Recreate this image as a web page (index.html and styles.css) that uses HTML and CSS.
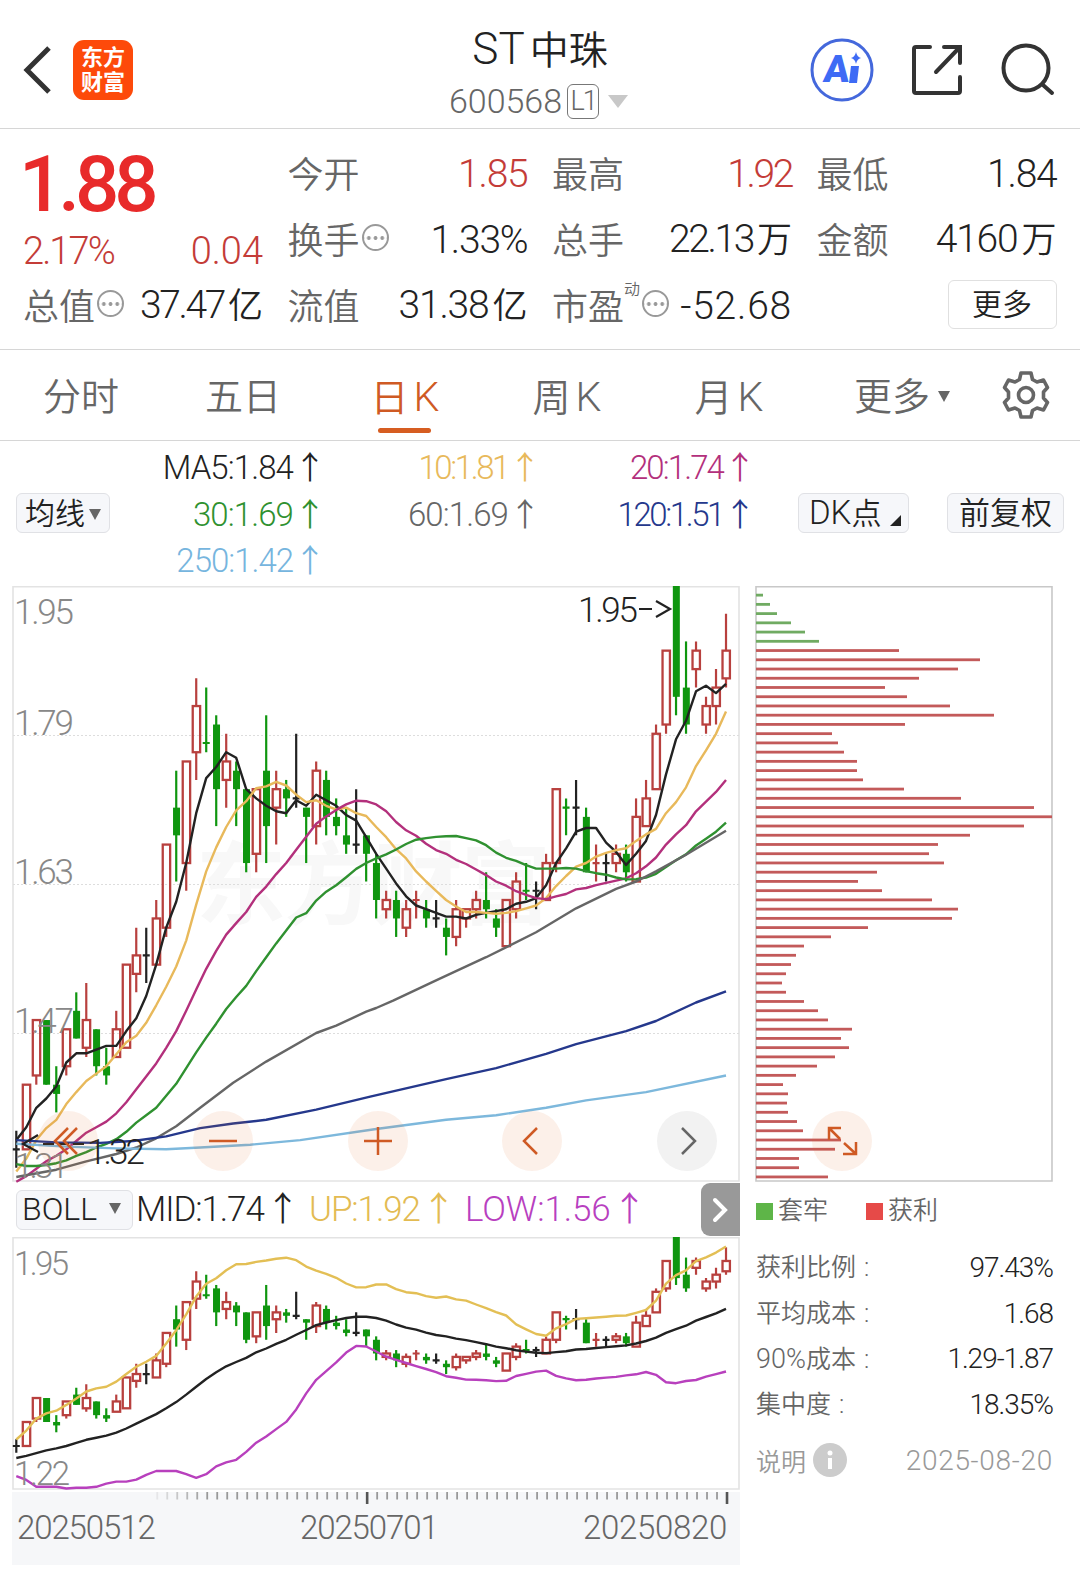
FILE: index.html
```
<!DOCTYPE html>
<html lang="zh-CN">
<head>
    <meta charset="UTF-8">
    <meta name="viewport" content="width=device-width, initial-scale=1.0">
    <title>ST中珠 600568</title>
    <link rel="stylesheet" href="styles.css">
</head>
<body>
    <header class="header">
        <div class="header-left">
            <svg class="back-icon" width="30" height="50" viewBox="0 0 30 50"><path d="M26 3 L4 25 L26 47" fill="none" stroke="#333" stroke-width="5"/></svg>
            <div class="logo"><span>东方</span><span>财富</span></div>
        </div>
        <div class="header-title">
            <h1><span class="latin">ST</span>中珠</h1>
            <div class="code">
                <span class="code-num">600568</span>
                <span class="level">L1</span>
                <span class="code-arrow"></span>
            </div>
        </div>
        <div class="header-right">
            <svg width="64" height="64" viewBox="0 0 64 64">
                <circle cx="32" cy="32" r="30" fill="none" stroke="#4468dc" stroke-width="3"/>
                <text x="17" y="44" class="ai-text" transform="skewX(-6)">A</text>
                <path d="M41 28 h8 l-2 17 h-8 z" fill="#3e6bf5"/>
                <path d="M46 14 q1 5 5 6 q-4 1 -5 6 q-1 -5 -5 -6 q4 -1 5 -6z" fill="#3e6bf5"/>
            </svg>
            <svg width="54" height="54" viewBox="0 0 54 54" fill="none" stroke="#333" stroke-width="4" stroke-linecap="round">
                <path d="M20 4 H6 Q4 4 4 6 V48 Q4 50 6 50 H48 Q50 50 50 48 V34"/>
                <path d="M34 4 H50 V20 M49 5 L26 29"/>
            </svg>
            <svg width="54" height="54" viewBox="0 0 54 54" fill="none" stroke="#333" stroke-width="4" stroke-linecap="round">
                <circle cx="26" cy="25" r="22.5"/>
                <path d="M43 42 L52 50"/>
            </svg>
        </div>
    </header>

    <section class="quote">
        <div class="price-cell">
            <div class="price">1.88</div>
            <div class="change"><span class="pct">2.17%</span><span>0.04</span></div>
        </div>
        <div class="cell"><label>今开</label><span class="val red">1.85</span></div>
        <div class="cell"><label>最高</label><span class="val red tight">1.92</span></div>
        <div class="cell"><label>最低</label><span class="val">1.84</span></div>
        <div class="cell"><label>换手<i class="dots"></i></label><span class="val">1.33%</span></div>
        <div class="cell"><label>总手</label><span class="val tight">22.13<b>万</b></span></div>
        <div class="cell"><label>金额</label><span class="val">4160<b>万</b></span></div>
        <div class="cell"><label>总值<i class="dots"></i></label><span class="val tight">37.47<b>亿</b></span></div>
        <div class="cell"><label>流值</label><span class="val">31.38<b>亿</b></span></div>
        <div class="cell"><label>市盈<sup>动</sup><i class="dots"></i></label><span class="val loose">-52.68</span></div>
        <div class="cell cell-more"><button class="more-btn">更多</button></div>
    </section>

    <nav class="tabs">
        <a class="tab">分时</a>
        <a class="tab">五日</a>
        <a class="tab active">日<span class="k">K</span></a>
        <a class="tab">周<span class="k">K</span></a>
        <a class="tab">月<span class="k">K</span></a>
        <a class="tab tab-more">更多<i class="down"></i></a>
        <svg class="gear" width="48" height="50" viewBox="-24 -25 48 50" fill="none" stroke="#666" stroke-width="3.6" stroke-linejoin="round">
            <path d="M-5 -22 H5 L6.5 -15.5 L11 -13 L17.5 -15 L21.5 -7.5 L17.5 -3 V3 L21.5 7.5 L17.5 15 L11 13 L6.5 15.5 L5 22 H-5 L-6.5 15.5 L-11 13 L-17.5 15 L-21.5 7.5 L-17.5 3 V-3 L-21.5 -7.5 L-17.5 -15 L-11 -13 L-6.5 -15.5 Z"/>
            <circle r="7.5"/>
        </svg>
    </nav>

    <section class="ma-bar">
        <button class="tool-btn ma-btn">均线<i class="down"></i></button>
        <div class="ma-list">
            <span class="c-ma5">MA5:1.84<em>↑</em></span>
            <span class="c-ma10">10:1.81<em>↑</em></span>
            <span class="c-ma20">20:1.74<em>↑</em></span>
            <span class="c-ma30">30:1.69<em>↑</em></span>
            <span class="c-ma60">60:1.69<em>↑</em></span>
            <span class="c-ma120">120:1.51<em>↑</em></span>
            <span class="c-ma250">250:1.42<em>↑</em></span>
        </div>
        <button class="tool-btn dk-btn"><span class="latin">DK</span>点<i class="corner"></i></button>
        <button class="tool-btn fq-btn">前复权</button>
    </section>

    <main class="charts">
        <div class="left">
            <div class="kline">
                <svg id="kline" width="728" height="596"></svg>
                <button class="round" style="left:26px"><svg width="60" height="60"><path d="M30 17 L17 30 L30 43 M39 17 L26 30 L39 43"/></svg></button>
                <button class="round" style="left:181px"><svg width="60" height="60"><path d="M16 30 H44"/></svg></button>
                <button class="round" style="left:336px"><svg width="60" height="60"><path d="M16 30 H44 M30 16 V44"/></svg></button>
                <button class="round" style="left:490px"><svg width="60" height="60"><path d="M35 17 L22 30 L35 43"/></svg></button>
                <button class="round gray" style="left:645px"><svg width="60" height="60"><path d="M25 17 L38 30 L25 43"/></svg></button>
            </div>
            <div class="boll-bar">
                <button class="tool-btn boll-btn">BOLL<i class="down"></i></button>
                <span class="boll-mid">MID:1.74<em>↑</em></span>
                <span class="boll-up">UP:1.92<em>↑</em></span>
                <span class="boll-low">LOW:1.56<em>↑</em></span>
                <button class="next-btn"><svg width="20" height="28" viewBox="0 0 20 28"><path d="M4 4 L14 14 L4 24" fill="none" stroke="#fff" stroke-width="4" stroke-linecap="round"/></svg></button>
            </div>
            <svg id="boll" width="728" height="253"></svg>
            <div class="axis">
                <svg id="ticks" width="728" height="14"></svg>
                <div class="dates"><span>20250512</span><span>20250701</span><span class="last">20250820</span></div>
            </div>
        </div>

        <aside class="chips">
            <div class="chip-chart">
                <svg id="chips" width="298" height="596"></svg>
                <button class="round" style="left:57px"><svg width="60" height="60"><path d="M17 29 V17 H29 M17 17 L28 28 M31 43 H44 V31 M44 43 L32 32"/></svg></button>
            </div>
            <div class="legend">
                <span><i class="sq sq-green"></i>套牢</span>
                <span><i class="sq sq-red"></i>获利</span>
            </div>
            <dl class="stats">
                <div><dt>获利比例<u>:</u></dt><dd>97.43%</dd></div>
                <div><dt>平均成本<u>:</u></dt><dd>1.68</dd></div>
                <div><dt><span class="latin">90%</span>成本<u>:</u></dt><dd>1.29-1.87</dd></div>
                <div><dt>集中度<u>:</u></dt><dd>18.35%</dd></div>
            </dl>
            <div class="note">
                <span class="note-label">说明<svg width="34" height="34"><circle cx="17" cy="17" r="17" fill="#ccc"/><circle cx="17" cy="10" r="2.5" fill="#fff"/><path d="M17 15 V26" stroke="#fff" stroke-width="4"/></svg></span>
                <span class="note-date">2025-08-20</span>
            </div>
        </aside>
    </main>

    <script src="chart.js"></script>
</body>
</html>
```
FILE: styles.css
```
/* Basic Reset */
* {
    margin: 0;
    padding: 0;
    box-sizing: border-box;
}

body {
    width: 1080px;
    height: 1576px;
    background-color: #fff;
    color: #222;
    font-family: Roboto, "Noto Sans CJK SC", sans-serif;
    font-weight: 350;
    overflow: hidden;
}

button {
    font: inherit;
    color: inherit;
    border: none;
}

i, em, b, u {
    font-style: normal;
    font-weight: inherit;
    text-decoration: none;
}

svg {
    display: block;
    overflow: visible;
}

/* Header */
.header {
    display: grid;
    grid-template-columns: 300px 1fr 300px;
    height: 129px;
    border-bottom: 1px solid #d6d6d6;
}

.header-left {
    display: flex;
    align-items: center;
    padding: 12px 0 0 23px;
}

.logo {
    display: flex;
    flex-direction: column;
    align-items: center;
    justify-content: center;
    width: 60px;
    height: 60px;
    margin-left: 20px;
    border-radius: 11px;
    background-color: #fd4a0a;
    color: #fff;
    font-size: 22px;
    font-weight: 700;
    line-height: 25px;
}

.header-title {
    display: flex;
    flex-direction: column;
    align-items: center;
    padding-top: 24px;
}

.header-title h1 {
    font-size: 39px;
    font-weight: 350;
    line-height: 50px;
}

.header-title h1 .latin {
    font-size: 44px;
    margin-right: 5px;
}

.code {
    display: flex;
    align-items: center;
    height: 50px;
    margin-left: -3px;
    color: #666;
}

.code-num {
    font-size: 34px;
}

.level {
    width: 32px;
    height: 35px;
    margin-left: 5px;
    border: 1.5px solid #777;
    border-radius: 6px;
    font-size: 27px;
    line-height: 33px;
    letter-spacing: -2px;
    text-align: center;
}

.code-arrow {
    margin-left: 9px;
    border: 10px solid transparent;
    border-top: 13px solid #c8c8c8;
    border-bottom: 0;
}

.header-right {
    display: flex;
    align-items: center;
    gap: 36px;
    padding: 12px 0 0 30px;
}

.ai-text {
    font: 900 38px Roboto, sans-serif;
    fill: #3e6bf5;
}

/* Quote */
.quote {
    display: grid;
    grid-template-columns: repeat(4, 240px);
    grid-template-rows: repeat(3, 66px);
    column-gap: 24.5px;
    height: 221px;
    padding: 12px 23px 0;
    border-bottom: 1px solid #d6d6d6;
}

.price-cell {
    grid-row: span 2;
    color: #c43c38;
}

.price {
    height: 88px;
    margin-left: -4px;
    color: #e82a2a;
    font-size: 78px;
    font-weight: 500;
    line-height: 88px;
    letter-spacing: -5px;
}

.change {
    display: flex;
    justify-content: space-between;
    font-size: 38px;
    line-height: 45px;
}

.pct {
    letter-spacing: -1.9px;
}

.cell {
    display: flex;
    align-items: center;
    justify-content: space-between;
    white-space: nowrap;
}

.cell label {
    display: flex;
    align-items: center;
    margin-top: -5px;
    color: #666;
    font-size: 36px;
}

.cell .val {
    font-size: 39px;
    line-height: 60px;
    letter-spacing: -1.2px;
}

.cell .tight {
    letter-spacing: -2.4px;
}

.cell .loose {
    letter-spacing: 0.8px;
}

.val b {
    margin-left: 4px;
    font-size: 35px;
    letter-spacing: 0;
}

.red {
    color: #c43c38;
}

.cell sup {
    align-self: flex-start;
    font-size: 16px;
    line-height: 24px;
}

.dots {
    width: 27px;
    height: 27px;
    margin-left: 2px;
    border: 2px solid #999;
    border-radius: 50%;
    background: radial-gradient(circle, #999 1.6px, transparent 2.2px) 1.5px center / 6.7px 22px repeat-x;
}

.cell-more {
    justify-content: flex-end;
}

.more-btn {
    width: 109px;
    height: 49px;
    margin-top: -3px;
    border: 1px solid #e0e0e0;
    border-radius: 6px;
    background-color: #fff;
    font-size: 30px;
    line-height: 45px;
}

/* Tabs */
.tabs {
    display: flex;
    align-items: center;
    height: 91px;
    border-bottom: 1px solid #d6d6d6;
    color: #666;
    font-size: 38px;
}

.tab {
    position: relative;
    width: 162px;
    padding-top: 4px;
    line-height: 86px;
    text-align: center;
}

.tab .k {
    margin-left: 5px;
    font-size: 41px;
}

.tab.active {
    color: #cf5a24;
}

.tab.active::after {
    content: "";
    position: absolute;
    left: 54px;
    bottom: 8px;
    width: 53px;
    height: 5px;
    border-radius: 3px;
    background-color: #d65d21;
}

.tab-more {
    width: 184px;
}

.down {
    display: inline-block;
    margin-left: 8px;
    vertical-align: 4px;
    border: 6.5px solid transparent;
    border-top: 11px solid #666;
    border-bottom: 0;
}

.tab-more .down {
    vertical-align: 8px;
}

.gear {
    margin-left: 8px;
}

/* MA legend */
.ma-bar {
    display: flex;
    align-items: flex-start;
    height: 145px;
    padding: 4px 16px 0;
}

.tool-btn {
    height: 40px;
    margin-top: 48px;
    border: 1px solid #e0e1e5;
    border-radius: 6px;
    background-color: #f6f7fa;
    font-size: 30px;
    line-height: 37px;
    white-space: nowrap;
}

.ma-btn {
    width: 94px;
}

.ma-btn .down {
    margin-left: 4px;
}

.ma-list {
    display: grid;
    grid-template-columns: 216px 215px 215px;
    grid-auto-rows: 46.5px;
    width: 688px;
    font-size: 33px;
    line-height: 46px;
    text-align: right;
}

em {
    display: inline-block;
    width: 32px;
    margin-left: 1px;
    font-family: "Noto Sans CJK SC", sans-serif;
    font-size: 32px;
    line-height: 1;
    letter-spacing: 0;
}

.c-ma5 { color: #222; letter-spacing: -0.9px; }
.c-ma10 { color: #e8b95b; letter-spacing: -2.4px; }
.c-ma20 { color: #b3307c; letter-spacing: -1.9px; }
.c-ma30 { color: #2f9130; letter-spacing: -0.9px; }
.c-ma60 { color: #666; letter-spacing: -0.9px; }
.c-ma120 { color: #25388c; letter-spacing: -2.4px; }
.c-ma250 { color: #76b5de; letter-spacing: -1px; }

.dk-btn {
    width: 111px;
    text-align: left;
    padding-left: 10px;
}

.dk-btn .latin {
    font-size: 33px;
}

.corner {
    display: inline-block;
    margin-left: 9px;
    vertical-align: -2px;
    border-left: 11px solid transparent;
    border-bottom: 11px solid #222;
}

.fq-btn {
    width: 117px;
    margin-left: auto;
    font-size: 31px;
}

/* Charts */
.charts {
    display: flex;
}

.left {
    width: 728px;
    margin-left: 12px;
}

.kline, .chip-chart {
    position: relative;
    height: 596px;
}

.round {
    position: absolute;
    top: 525px;
    width: 60px;
    height: 60px;
    border-radius: 50%;
    background-color: rgba(226, 110, 40, 0.1);
}

.round path {
    fill: none;
    stroke: #cf5a24;
    stroke-width: 2.5;
}

.round.gray {
    background-color: #f2f2f2;
}

.round.gray path {
    stroke: #666;
}

.label {
    fill: #888;
    font-size: 35px;
}

.label-sm {
    fill: #888;
    font-size: 33px;
}

.mark {
    fill: #222;
    font-size: 35px;
}

.watermark {
    fill: #f8f8f8;
    font-size: 90px;
    font-weight: 700;
}

/* BOLL */
.boll-bar {
    display: flex;
    align-items: center;
    height: 55px;
    font-size: 35px;
    line-height: 56px;
    white-space: nowrap;
}

.boll-bar .tool-btn {
    margin-top: 0;
}

.boll-btn {
    width: 117px;
    margin-left: 4px;
    padding-left: 5px;
    font-size: 32px;
    text-align: left;
}

.boll-btn .down {
    margin-left: 12px;
    vertical-align: 6px;
}

.boll-mid {
    width: 173px;
    margin-left: 3px;
    letter-spacing: -1.1px;
}

.boll-up {
    width: 156px;
    color: #e3bb52;
    letter-spacing: -1.1px;
}

.boll-low {
    width: 190px;
    color: #b83fc0;
    letter-spacing: -0.1px;
}

.boll-bar em {
    width: 34px;
    margin-left: 2px;
    font-size: 34px;
}

.next-btn {
    display: flex;
    align-items: center;
    justify-content: center;
    width: 39px;
    height: 53px;
    margin-left: auto;
    border-radius: 9px 0 0 9px;
    background-color: #999;
}

.axis {
    height: 73px;
    margin-top: 2px;
    background-color: #f6f7f9;
}

.dates {
    display: flex;
    justify-content: space-between;
    padding: 0 13px 0 5px;
    color: #666;
    font-size: 33px;
    line-height: 43px;
    letter-spacing: -1.1px;
}

.dates .last {
    letter-spacing: -0.3px;
}

/* Chip distribution */
.chips {
    width: 298px;
    margin-left: 15px;
}

.legend {
    display: flex;
    gap: 37px;
    height: 59px;
    color: #666;
    font-size: 25px;
    line-height: 57px;
}

.sq {
    display: inline-block;
    width: 17px;
    height: 17px;
    margin: 0 5px 0 1px;
    vertical-align: -1px;
}

.sq-green {
    background-color: #5eb548;
}

.sq-red {
    background-color: #e64a48;
}

.stats div {
    display: flex;
    justify-content: space-between;
    height: 45.5px;
    line-height: 54px;
}

.stats dt {
    padding-left: 1px;
    color: #666;
    font-size: 25px;
}

.stats dt .latin {
    font-size: 27px;
}

.stats u {
    margin-left: 8px;
}

.stats dd {
    font-size: 28px;
    letter-spacing: -1px;
}

.note {
    display: flex;
    align-items: center;
    justify-content: space-between;
    height: 73px;
    color: #999;
}

.note-label {
    display: flex;
    align-items: center;
    gap: 7px;
    padding-left: 1px;
    font-size: 25px;
}

.note-date {
    padding-top: 2px;
    font-size: 28px;
    letter-spacing: 0.7px;
}
```
FILE: chart.js
```
// [open, close, high, low] in cents
const days = [
    [134,134,136,132],[134,141,141,134],[142,148,148,141],[148,141,148,141],[141,140,143,138],[143,147,147,142],
    [149,146,151,146],[145,148,152,144],[147,143,147,142],[143,142,145,141],[144,147,149,144],[145,154,154,145],
    [153,155,158,151],[155,155,158,152],[154,159,161,154],[158,167,167,157],[171,168,175,163],[165,176,176,162],
    [177,182,185,174],[178,178,184,177],[180,173,181,169],[174,176,179,171],[175,173,176,169],[173,165,173,164],
    [166,173,173,164],[175,169,181,165],[171,173,175,167],[173,172,174,170],[172,172,179,171],[171,170,171,165],
    [169,175,176,167],[174,170,175,168],[170,169,172,168],[168,167,171,166],[167,167,173,166],[168,166,168,163],
    [165,161,166,159],[160,161,162,159],[161,159,162,157],[158,160,161,157],[161,161,162,159],[160,159,161,158],
    [159,159,161,158],[158,157,159,155],[157,160,161,156],[159,160,160,158],[160,161,162,159],[161,160,164,159],
    [159,158,160,157],[156,161,161,156],[160,163,164,159],[162,162,165,161],[162,162,163,160],[161,165,166,161],
    [165,173,173,164],[171,171,172,168],[171,171,174,168],[170,164,171,164],[165,165,167,163],[165,165,166,163],
    [165,166,167,164],[166,164,167,163],[163,170,172,163],[169,172,174,169],[173,179,180,173],[180,188,188,179],
    [195,183,195,181],[184,180,189,179],[186,188,189,184],[180,182,183,179],[182,184,186,180],[185,188,192,184]
];
// flat days: colour follows the previous close
const flatColor = { 19: 'g', 40: 'r', 51: 'g', 55: 'g', 58: 'r' };
const RED = '#b8403e', GREEN = '#0f960f', BLACK = '#222';

// averages for the days before enough closes are loaded
const seed = {
    ma5: [135,136.4,138.5,139.5],
    ma10: [131.6,133,135,136.3,137.2,138.9,140.2,141.4,142.2],
    ma20: [130.5,131.1,131.9,132.7,133.3,134,134.9,135.8,136.4,137,137.9,139.1,140.5,141.9,143.3,145,146.8,149,151.3],
    ma30: [132.4,132.2,132.2,132.3,132.5,132.8,133.3,133.7,134.2,134.6,135.1,135.9,136.9,137.7,138.5,139.8,141.1,142.8,144.5,146.1,147.6,149.2,150.5,151.7,153.3,154.8,156.3,157.7,159.1],
    up: [135.9,138.5,142,143.5,144.3,146,147.9,149.9,150.8,151.3,152.8,155,157.1,158.6,160.3,163.9,167.8,172.4,177.6],
    low: [125.2,124.1,122.1,122.1,122.1,121.6,121.8,121.8,122.1,123,123.6,123.6,124.2,125.6,126.7,126.7,126.7,125.8,124.7]
};
const ma60 = [[0,131],[4,131.8],[7,132.7],[10,133.5],[12,134.2],[14,135.2],[16,136.5],[18.4,138.5],[21.7,141.2],[25,143.5],[30,146.6],[32,147.4],[35,148.9],[36,149.3],[37.7,150.1],[42,152.3],[47,154.8],[52,157.5],[56,160.1],[60,162.2],[62,163],[64,164.1],[67,165.9],[71,168.5]];
const ma120 = [[0,135],[4,134.75],[8.4,134.7],[11.7,134.9],[15,135.4],[18.4,136.3],[21.7,136.8],[25,137.2],[30,138.3],[35.4,139.7],[43,141.6],[48,142.8],[53,144.35],[56,145.4],[61,146.8],[64,147.9],[68,149.9],[71,151.1]];
const ma250 = [[0,134.6],[5,134.3],[10,134.1],[15,134],[18.4,134.2],[23.4,134.5],[28.4,135],[36,136.2],[43,137.2],[48,137.7],[53,138.5],[57,139.3],[63,140.2],[71,142]];

const xAt = i => 4.3 + i * 9.996;

function average(n, start) {
    return days.map((d, i) => {
        if (i < n - 1) return [i, start[i]];
        const part = days.slice(i - n + 1, i + 1);
        return [i, part.reduce((s, p) => s + p[1], 0) / n];
    });
}

function band(sign, start) {
    return average(20, seed.ma20).map(([i, mid]) => {
        if (i < 19) return [i, start[i]];
        const sq = days.slice(i - 19, i + 1).reduce((s, p) => s + (p[1] - mid) ** 2, 0);
        return [i, mid + sign * 2 * Math.sqrt(sq / 19)];
    });
}

function line(points, y, color) {
    const pts = points.map(p => xAt(p[0]).toFixed(1) + ',' + y(p[1]).toFixed(1)).join(' ');
    return `<polyline points="${pts}" fill="none" stroke="${color}" stroke-width="2.4" stroke-linejoin="round"/>`;
}

function candles(y) {
    return days.map(([o, c, h, l], i) => {
        const x = xAt(i);
        const top = y(Math.max(o, c)), bottom = y(Math.min(o, c));
        if (o === c) {
            const color = { r: RED, g: GREEN }[flatColor[i]] || BLACK;
            return `<path d="M${x} ${y(h)} V${y(l)} M${x - 3.5} ${top} H${x + 3.5}" stroke="${color}" stroke-width="2.2"/>`;
        }
        if (c > o) {
            return `<path d="M${x} ${y(h)} V${top} M${x} ${bottom} V${y(l)}" stroke="${RED}" stroke-width="2.2"/>` +
                `<rect x="${x - 3.5}" y="${top}" width="7.4" height="${bottom - top}" fill="none" stroke="${RED}" stroke-width="2.3"/>`;
        }
        return `<path d="M${x} ${y(h)} V${y(l)}" stroke="${GREEN}" stroke-width="2.2"/>` +
            `<rect x="${x - 3.2}" y="${top}" width="7" height="${bottom - top}" fill="${GREEN}"/>`;
    }).join('');
}

// Daily K
const yk = p => (195 - p) * 9.235;
let html = '<text class="watermark" x="184" y="331" textLength="355">东方财富</text>';
html += '<path d="M1 .8 H727 V595 H1 Z" fill="none" stroke="#e3e3e3" stroke-width="1.6"/>';
[149, 298, 447].forEach(y => {
    html += `<path d="M1 ${y}.5 H727" stroke="#ddd" stroke-width="1" stroke-dasharray="2 2"/>`;
});
html += candles(yk);
html += line(average(5, seed.ma5), yk, '#222') + line(average(10, seed.ma10), yk, '#e8b95b');
html += line(average(20, seed.ma20), yk, '#b3307c') + line(average(30, seed.ma30), yk, '#2f9130');
html += line(ma60, yk, '#666') + line(ma120, yk, '#25388c') + line(ma250, yk, '#7db8dc');
[['1.95', 38], ['1.79', 149], ['1.63', 298], ['1.47', 447], ['1.31', 592]].forEach(([t, y]) => {
    html += `<text class="label" x="2" y="${y}" textLength="${t === '1.31' ? 55 : 60}">${t}</text>`;
});
html += '<text class="mark" x="566" y="36" textLength="60">1.95</text><path d="M627 23 H640 M644 15 L658 23 L644 31" fill="none" stroke="#222" stroke-width="2.2"/>';
html += '<path d="M26 549 L11 558 L26 566 M31 558 H42 M46 558 H57 M61 558 H72" fill="none" stroke="#222" stroke-width="2.2"/><text class="mark" x="75" y="578" textLength="58">1.32</text>';
document.getElementById('kline').innerHTML = html;

// BOLL
const yb = p => (195 - p) * 3.426;
html = '<path d="M1 .8 H727 V252 H1 Z" fill="none" stroke="#e3e3e3" stroke-width="1.6"/>';
html += candles(yb);
html += line(average(20, seed.ma20), yb, '#222') + line(band(1, seed.up), yb, '#e3bf55') + line(band(-1, seed.low), yb, '#b840bd');
html += '<text class="label-sm" x="2" y="38" textLength="55">1.95</text><text class="label-sm" x="2" y="248" textLength="56">1.22</text>';
document.getElementById('boll').innerHTML = html;

// Time axis, ticks fade out to the left
html = '';
for (let i = 14; i < 72; i++) {
    const big = i === 35 || i === 71;
    const alpha = Math.min(1, (i - 13) / 6);
    html += `<path d="M${xAt(i) + 1} 0 V${big ? 12 : 7.5}" stroke="${big ? '#555' : '#999'}" stroke-width="${big ? 2.6 : 1.8}" opacity="${alpha}"/>`;
}
document.getElementById('ticks').innerHTML = html;

// Holding cost: one bar per cent from 1.94 down to 1.31
const bars = [7,14,21,35,49,63,143,224,202,163,129,151,194,238,149,76,82,88,101,101,107,148,205,278,296,268,214,182,173,188,121,102,
    126,176,202,196,112,75,48,40,35,30,26,30,48,62,72,96,85,93,79,61,40,27,32,31,32,41,47,85,79,43,43,72];
html = '<path d="M1 .7 H297 V595 H1 Z" fill="none" stroke="#c8c8c8" stroke-width="1.6"/>';
bars.forEach((w, i) => {
    html += `<rect x="1" y="${((i + 1) * 9.235 - 1.5).toFixed(2)}" width="${w}" height="2.8" fill="${i < 6 ? '#70ab62' : '#c35a5a'}"/>`;
});
document.getElementById('chips').innerHTML = html;
```
